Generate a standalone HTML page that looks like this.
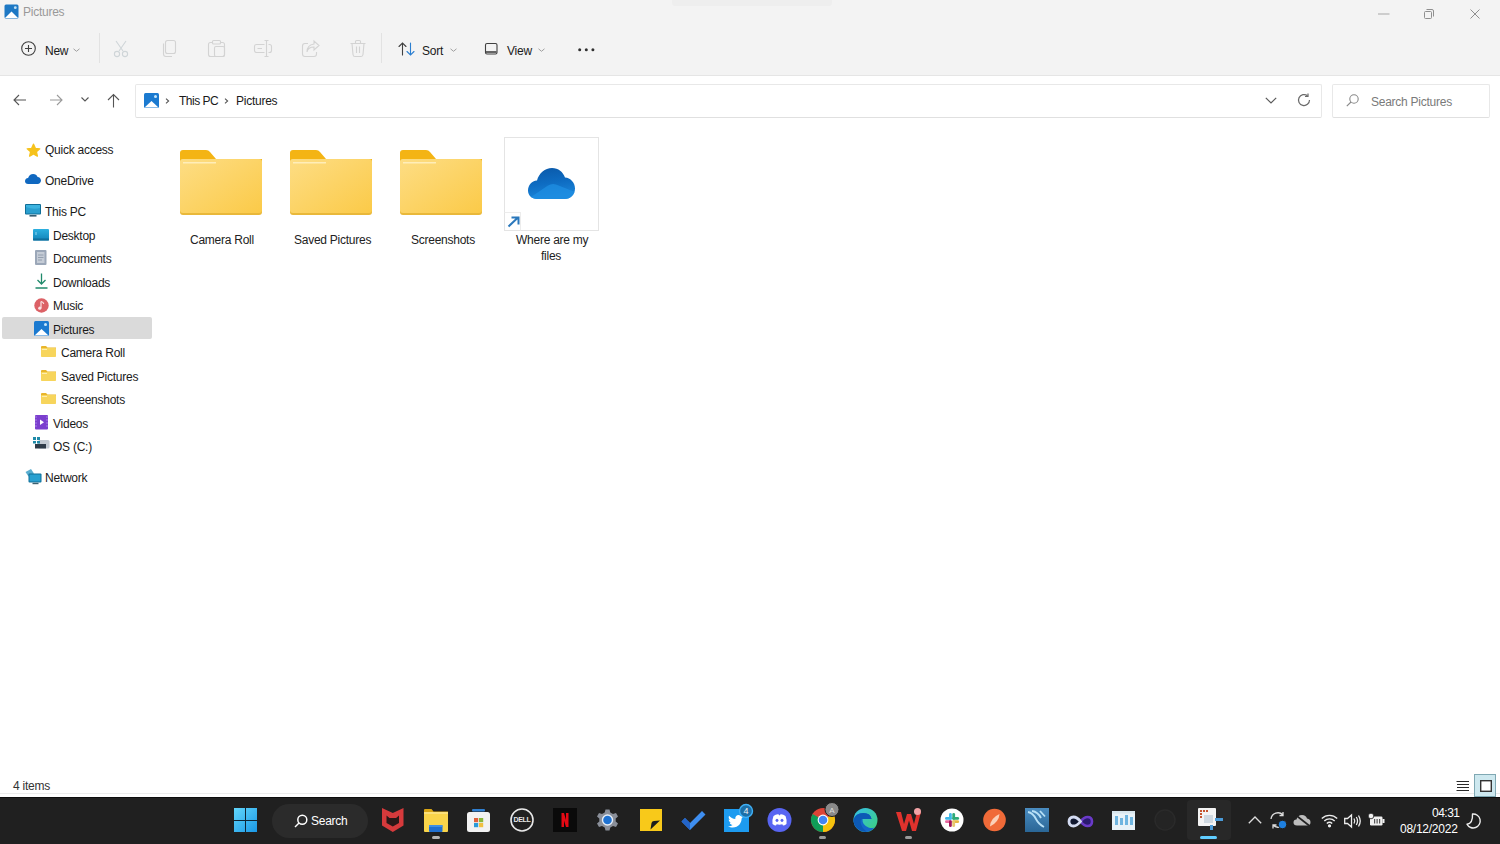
<!DOCTYPE html>
<html><head><meta charset="utf-8">
<style>
*{margin:0;padding:0;box-sizing:border-box}
html,body{width:1500px;height:844px;overflow:hidden;background:#fff;font-family:"Liberation Sans",sans-serif;font-size:12px;color:#1a1a1a}
.a{position:absolute}
.t{position:absolute;white-space:nowrap;line-height:14px;letter-spacing:-0.25px}
#top{position:absolute;left:0;top:0;width:1500px;height:76px;background:#f3f3f3;border-bottom:1px solid #e5e5e5}
#task{position:absolute;left:0;top:797px;width:1500px;height:47px;background:#202020;border-top:1px solid #0d0d0d}
svg{position:absolute;overflow:visible}
</style></head><body>
<div id="top"></div>
<div class="a" style="left:672px;top:0;width:160px;height:6px;background:#eeeeee;border-radius:0 0 3px 3px"></div>

<!-- ============ TITLE BAR ============ -->
<svg style="left:4px;top:4px" width="15" height="15" viewBox="0 0 15 15">
  <rect x="0.5" y="0.5" width="14" height="14" rx="1.5" fill="#1d78c4"/>
  <path d="M1,14 L7.5,7.5 L14,14 Z" fill="#fff"/>
  <circle cx="11.3" cy="3.7" r="1.4" fill="#bfe0f5"/>
</svg>
<div class="t" style="left:23px;top:5px;color:#999">Pictures</div>
<svg style="left:1378px;top:13px" width="12" height="2"><rect x="0" y="0.5" width="11.5" height="1" fill="#a8a8a8"/></svg>
<svg style="left:1424px;top:9px" width="10" height="10" viewBox="0 0 10 10" fill="none" stroke="#8f8f8f" stroke-width="1">
  <rect x="0.5" y="2.5" width="7" height="7" rx="1"/><path d="M2.5,0.5 H8 Q9.5,0.5 9.5,2 V7.5"/>
</svg>
<svg style="left:1470px;top:9px" width="10" height="10" viewBox="0 0 10 10" stroke="#8f8f8f" stroke-width="1">
  <path d="M0.5,0.5 L9.5,9.5 M9.5,0.5 L0.5,9.5"/>
</svg>

<!-- ============ TOOLBAR ============ -->
<svg style="left:21px;top:41px" width="15" height="15" viewBox="0 0 15 15" fill="none" stroke="#404040" stroke-width="1.1">
  <circle cx="7.5" cy="7.5" r="6.8"/><path d="M7.5,4 V11 M4,7.5 H11"/>
</svg>
<div class="t" style="left:45px;top:44px">New</div>
<svg style="left:73px;top:48px" width="7" height="4" viewBox="0 0 7 4" fill="none" stroke="#a0a0a0" stroke-width="1"><path d="M0.5,0.8 L3.5,3.3 L6.5,0.8"/></svg>
<div class="a" style="left:99px;top:33px;width:1px;height:30px;background:#e2e2e2"></div>

<!-- disabled icons -->
<svg style="left:112px;top:40px" width="18" height="18" viewBox="0 0 18 18" fill="none" stroke="#cfd5d8" stroke-width="1.1">
  <path d="M4,1 L11,11 M14,1 L7,11"/><circle cx="5" cy="14" r="2.6"/><circle cx="13" cy="14" r="2.6"/>
</svg>
<svg style="left:162px;top:40px" width="15" height="17" viewBox="0 0 15 17" fill="none" stroke="#d3d3d3" stroke-width="1.1">
  <rect x="3.5" y="0.5" width="10" height="13" rx="2"/><path d="M1.5,3.5 V14 Q1.5,16.5 4,16.5 H10"/>
</svg>
<svg style="left:208px;top:40px" width="17" height="17" viewBox="0 0 17 17" fill="none" stroke="#d3d3d3" stroke-width="1.1">
  <path d="M4.5,2.5 H2.5 Q0.5,2.5 0.5,4.5 V14.5 Q0.5,16.5 2.5,16.5 H14.5 Q16.5,16.5 16.5,14.5 V4.5 Q16.5,2.5 14.5,2.5 H12.5"/><rect x="4.5" y="0.5" width="8" height="3.5" rx="1"/><rect x="6.5" y="6.5" width="10" height="10" rx="1.5"/>
</svg>
<svg style="left:254px;top:40px" width="18" height="17" viewBox="0 0 18 17" fill="none" stroke="#d3d3d3" stroke-width="1.1">
  <path d="M10.5,4.5 H2.5 Q0.5,4.5 0.5,6.5 V10.5 Q0.5,12.5 2.5,12.5 H10.5 M14.5,4.5 H15.5 Q17.5,4.5 17.5,6.5 V10.5 Q17.5,12.5 15.5,12.5 H14.5 M12.5,0.5 V16.5 M10.5,0.5 H14.5 M10.5,16.5 H14.5 M3.5,8.5 H8"/>
</svg>
<svg style="left:302px;top:41px" width="18" height="16" viewBox="0 0 18 16" fill="none" stroke="#d3d3d3" stroke-width="1.1">
  <path d="M6,2.5 H3 Q0.5,2.5 0.5,5 V13 Q0.5,15.5 3,15.5 H12 Q14.5,15.5 14.5,13 V11"/><path d="M5,11 Q6,6 12,6 V9 L17,4.5 L12,0 V3 Q5,4 5,11 Z"/>
</svg>
<svg style="left:350px;top:40px" width="16" height="17" viewBox="0 0 16 17" fill="none" stroke="#d3d3d3" stroke-width="1.1">
  <path d="M0.5,3.5 H15.5 M5.5,3.5 V1.5 Q5.5,0.5 6.5,0.5 H9.5 Q10.5,0.5 10.5,1.5 V3.5 M2,3.5 L3,14.5 Q3.2,16.5 5,16.5 H11 Q12.8,16.5 13,14.5 L14,3.5 M6.5,6.5 V13 M9.5,6.5 V13"/>
</svg>
<div class="a" style="left:381px;top:33px;width:1px;height:30px;background:#e2e2e2"></div>

<!-- sort -->
<svg style="left:398px;top:42px" width="18" height="14" viewBox="0 0 18 14" fill="none" stroke-width="1.1" stroke-linecap="round">
  <path d="M4.5,13 V1 M1,4.5 L4.5,1 L8,4.5" stroke="#404040"/>
  <path d="M12.5,1 V13 M9,9.5 L12.5,13 L16,9.5" stroke="#2b7fd0"/>
</svg>
<div class="t" style="left:422px;top:44px">Sort</div>
<svg style="left:450px;top:48px" width="7" height="4" viewBox="0 0 7 4" fill="none" stroke="#a0a0a0" stroke-width="1"><path d="M0.5,0.8 L3.5,3.3 L6.5,0.8"/></svg>
<!-- view -->
<svg style="left:485px;top:43px" width="13" height="12" viewBox="0 0 13 12" fill="none" stroke="#404040" stroke-width="1.1">
  <rect x="0.5" y="0.5" width="11.5" height="10.5" rx="1.5"/><path d="M1,9 H11.5" stroke-width="1.6"/>
</svg>
<div class="t" style="left:507px;top:44px">View</div>
<svg style="left:538px;top:48px" width="7" height="4" viewBox="0 0 7 4" fill="none" stroke="#a0a0a0" stroke-width="1"><path d="M0.5,0.8 L3.5,3.3 L6.5,0.8"/></svg>
<svg style="left:578px;top:48px" width="17" height="4" viewBox="0 0 17 4" fill="#303030">
  <circle cx="1.7" cy="1.8" r="1.5"/><circle cx="8.3" cy="1.8" r="1.5"/><circle cx="14.9" cy="1.8" r="1.5"/>
</svg>

<!-- ============ ADDRESS ROW ============ -->
<svg style="left:13px;top:94px" width="14" height="12" viewBox="0 0 14 12" fill="none" stroke="#555" stroke-width="1.1">
  <path d="M13,6 H1.5 M6,1 L1,6 L6,11"/>
</svg>
<svg style="left:49px;top:94px" width="14" height="12" viewBox="0 0 14 12" fill="none" stroke="#9a9a9a" stroke-width="1.1">
  <path d="M1,6 H12.5 M8,1 L13,6 L8,11"/>
</svg>
<svg style="left:81px;top:97px" width="8" height="5" viewBox="0 0 8 5" fill="none" stroke="#555" stroke-width="1.1"><path d="M0.5,0.5 L4,4 L7.5,0.5"/></svg>
<svg style="left:107px;top:93px" width="13" height="15" viewBox="0 0 13 15" fill="none" stroke="#555" stroke-width="1.1">
  <path d="M6.5,14.5 V1.5 M1,7 L6.5,1.5 L12,7"/>
</svg>

<div class="a" style="left:135px;top:84px;width:1187px;height:34px;border:1px solid #e8e8e8;border-bottom-color:#e0e0e0;background:#fff;border-radius:2px"></div>
<svg style="left:144px;top:93px" width="15" height="15" viewBox="0 0 15 15">
  <rect x="0" y="0" width="15" height="15" rx="1.5" fill="#1b7ad0"/>
  <path d="M0.5,14.5 L7.5,8 L14.5,14.5 Z" fill="#fff"/>
  <circle cx="11.5" cy="3.6" r="1.5" fill="#c6e6fb"/>
</svg>
<svg style="left:165px;top:98px" width="5" height="6" viewBox="0 0 5 6" fill="none" stroke="#555" stroke-width="1.1"><path d="M1,0.7 L3.6,3 L1,5.3"/></svg>
<div class="t" style="left:179px;top:94px;letter-spacing:-0.5px">This PC</div>
<svg style="left:224px;top:98px" width="5" height="6" viewBox="0 0 5 6" fill="none" stroke="#555" stroke-width="1.1"><path d="M1,0.7 L3.6,3 L1,5.3"/></svg>
<div class="t" style="left:236px;top:94px">Pictures</div>
<svg style="left:1265px;top:97px" width="12" height="7" viewBox="0 0 12 7" fill="none" stroke="#5a5a5a" stroke-width="1.2"><path d="M0.8,0.8 L6,6 L11.2,0.8"/></svg>
<svg style="left:1297px;top:93px" width="14" height="14" viewBox="0 0 14 14" fill="none" stroke="#6a6a6a" stroke-width="1.2">
  <path d="M12.5,7 A5.5,5.5 0 1 1 10.5,2.8"/><path d="M11,0.5 V3.5 H8"/>
</svg>
<div class="a" style="left:1332px;top:84px;width:158px;height:34px;border:1px solid #e8e8e8;border-bottom-color:#e0e0e0;background:#fff;border-radius:2px"></div>
<svg style="left:1346px;top:94px" width="13" height="13" viewBox="0 0 13 13" fill="none" stroke="#888" stroke-width="1.1">
  <circle cx="8" cy="5" r="4.2"/><path d="M5,8 L0.8,12.2"/>
</svg>
<div class="t" style="left:1371px;top:95px;color:#7a7a7a">Search Pictures</div>

<!-- ============ NAV PANE ============ -->
<div class="a" style="left:2px;top:317px;width:150px;height:22px;background:#dadada;border-radius:2px"></div>

<svg style="left:26px;top:143px" width="15" height="15" viewBox="0 0 24 24">
  <path d="M12,2 L14.9,8.6 L22,9.3 L16.6,14 L18.2,21 L12,17.3 L5.8,21 L7.4,14 L2,9.3 L9.1,8.6 Z" fill="#f6c21c" stroke="#f6c21c" stroke-width="2.2" stroke-linejoin="round"/>
</svg>
<div class="t" style="left:45px;top:143px">Quick access</div>

<svg style="left:25px;top:174px" width="16" height="10" viewBox="0 0 47 31" preserveAspectRatio="none">
  <path d="M9,31 C3.5,31 0,27 0,22.5 C0,17.5 3.5,13 9,12.5 C11,5 17,0 24,0 C30.5,0 35,4 37,9.5 C42.5,10 47,14.5 47,20.5 C47,26.5 42.5,31 37,31 Z" fill="#1068c0"/>
</svg>
<div class="t" style="left:45px;top:174px">OneDrive</div>

<svg style="left:25px;top:204px" width="16" height="13" viewBox="0 0 16 13">
  <rect x="0" y="0" width="16" height="10.5" rx="1" fill="#0f6e98"/>
  <rect x="1" y="1" width="14" height="8.5" fill="#2a9fcf"/>
  <path d="M1,1 H15 V4 Q8,6 1,3 Z" fill="#3cb3df"/>
  <rect x="4.5" y="11" width="7" height="1.6" fill="#355e73"/>
</svg>
<div class="t" style="left:45px;top:205px">This PC</div>

<svg style="left:33px;top:229px" width="16" height="12" viewBox="0 0 16 12">
  <defs><linearGradient id="dg" x1="0" y1="0" x2="0" y2="1"><stop offset="0" stop-color="#2cb0e0"/><stop offset="1" stop-color="#1283b8"/></linearGradient></defs>
  <rect x="0" y="0" width="16" height="11.5" rx="1" fill="url(#dg)"/>
  <rect x="0" y="9.5" width="16" height="2" rx="0.5" fill="#0f6f9c"/>
  <rect x="2.5" y="3" width="1" height="3" fill="#8ed6f2"/>
</svg>
<div class="t" style="left:53px;top:229px">Desktop</div>

<svg style="left:35px;top:250px" width="12" height="15" viewBox="0 0 12 15">
  <rect x="0" y="0" width="11.5" height="15" rx="1" fill="#9ba7b8"/>
  <rect x="2" y="2" width="7.5" height="11" fill="#c5ccd6"/>
  <path d="M3,5 H8.5 M3,7.5 H8.5 M3,10 H7" stroke="#8894a5" stroke-width="0.8"/>
</svg>
<div class="t" style="left:53px;top:252px">Documents</div>

<svg style="left:35px;top:273px" width="13" height="16" viewBox="0 0 13 16" fill="none" stroke="#208a6b" stroke-width="1.3">
  <path d="M6.5,0.5 V11 M2.5,7 L6.5,11 L10.5,7 M0.5,15 H12.5"/>
</svg>
<div class="t" style="left:53px;top:276px">Downloads</div>

<svg style="left:34px;top:298px" width="15" height="15" viewBox="0 0 15 15">
  <circle cx="7.5" cy="7.5" r="7.2" fill="#dc6166"/>
  <path d="M7,3.5 V10" stroke="#fbe3e5" stroke-width="1.2"/><circle cx="5.8" cy="10.2" r="1.6" fill="#fbe3e5"/><path d="M7,3.5 Q9.5,4 9.8,6" stroke="#fbe3e5" stroke-width="1.1" fill="none"/>
</svg>
<div class="t" style="left:53px;top:299px">Music</div>

<svg style="left:34px;top:321px" width="15" height="15" viewBox="0 0 15 15">
  <rect x="0" y="0" width="15" height="15" rx="1.5" fill="#1b7ad0"/>
  <path d="M0.5,14.5 L7.5,8 L14.5,14.5 Z" fill="#fff"/>
  <circle cx="11.5" cy="3.6" r="1.5" fill="#c6e6fb"/>
</svg>
<div class="t" style="left:53px;top:323px">Pictures</div>

<svg style="left:41px;top:346px" width="15" height="11" viewBox="0 0 15 11">
  <path d="M0,1 Q0,0 1,0 H5 L6.5,1.5 H15 V4 H0 Z" fill="#e9b52b"/>
  <rect x="0" y="2" width="15" height="9" rx="0.8" fill="#f7d55c"/>
  <rect x="1" y="3" width="5" height="0.8" fill="#fff3c4"/>
</svg>
<div class="t" style="left:61px;top:346px">Camera Roll</div>
<svg style="left:41px;top:370px" width="15" height="11" viewBox="0 0 15 11">
  <path d="M0,1 Q0,0 1,0 H5 L6.5,1.5 H15 V4 H0 Z" fill="#e9b52b"/>
  <rect x="0" y="2" width="15" height="9" rx="0.8" fill="#f7d55c"/>
  <rect x="1" y="3" width="5" height="0.8" fill="#fff3c4"/>
</svg>
<div class="t" style="left:61px;top:370px">Saved Pictures</div>
<svg style="left:41px;top:393px" width="15" height="11" viewBox="0 0 15 11">
  <path d="M0,1 Q0,0 1,0 H5 L6.5,1.5 H15 V4 H0 Z" fill="#e9b52b"/>
  <rect x="0" y="2" width="15" height="9" rx="0.8" fill="#f7d55c"/>
  <rect x="1" y="3" width="5" height="0.8" fill="#fff3c4"/>
</svg>
<div class="t" style="left:61px;top:393px">Screenshots</div>

<svg style="left:35px;top:415px" width="13" height="15" viewBox="0 0 13 15">
  <rect x="0" y="0" width="13" height="14.5" rx="1" fill="#7b3fce"/>
  <path d="M0,2 H2 M0,5 H2 M0,8 H2 M0,11 H2 M11,2 H13 M11,5 H13 M11,8 H13 M11,11 H13" stroke="#a77ce6" stroke-width="1"/>
  <path d="M5,4.5 L9,7.3 L5,10 Z" fill="#fff"/>
</svg>
<div class="t" style="left:53px;top:417px">Videos</div>

<svg style="left:33px;top:437px" width="17" height="12" viewBox="0 0 17 12">
  <rect x="5" y="3" width="11.5" height="8.5" rx="1.5" fill="#c3cad2"/>
  <rect x="2" y="7" width="11" height="4.5" fill="#2f3b48"/>
  <rect x="0" y="0" width="3" height="3" fill="#1f8aa8"/><rect x="4" y="0" width="3" height="3" fill="#1f8aa8"/>
  <rect x="0" y="4" width="3" height="2.5" fill="#1f8aa8"/><rect x="4" y="4" width="3" height="2.5" fill="#1f8aa8"/>
</svg>
<div class="t" style="left:53px;top:440px">OS (C:)</div>

<svg style="left:25px;top:469px" width="17" height="15" viewBox="0 0 17 15">
  <path d="M0.5,3 L6,0 L9,4.5 L3.5,7.5 Z" fill="#5aaed0"/>
  <rect x="3.5" y="4.5" width="13" height="9" rx="1" fill="#0f6e98"/>
  <rect x="4.5" y="5.5" width="11" height="7" fill="#28a0d0"/>
  <rect x="7.5" y="13.8" width="6" height="1.4" fill="#3b6070"/>
</svg>
<div class="t" style="left:45px;top:471px">Network</div>

<!-- ============ CONTENT ============ -->
<svg style="left:180px;top:150px" width="82" height="65" viewBox="0 0 82 65">
  <defs>
    <linearGradient id="fg" x1="0" y1="0" x2="1" y2="1">
      <stop offset="0" stop-color="#fddd84"/><stop offset="1" stop-color="#fbca48"/>
    </linearGradient>
  </defs>
  <path d="M0,3 Q0,0 3,0 H26 Q28.5,0 30,2 L36,9 H82 V20 H0 Z" fill="#f4b414"/>
  <rect x="0" y="9" width="82" height="56" rx="3" fill="#e9b83a"/>
  <rect x="0" y="9" width="82" height="54" rx="3" fill="url(#fg)"/>
  <rect x="3" y="12" width="33" height="1.5" fill="#fff2c8" opacity="0.8"/>
</svg>
<svg style="left:290px;top:150px" width="82" height="65" viewBox="0 0 82 65">
  <path d="M0,3 Q0,0 3,0 H26 Q28.5,0 30,2 L36,9 H82 V20 H0 Z" fill="#f4b414"/>
  <rect x="0" y="9" width="82" height="56" rx="3" fill="#e9b83a"/>
  <rect x="0" y="9" width="82" height="54" rx="3" fill="url(#fg)"/>
  <rect x="3" y="12" width="33" height="1.5" fill="#fff2c8" opacity="0.8"/>
</svg>
<svg style="left:400px;top:150px" width="82" height="65" viewBox="0 0 82 65">
  <path d="M0,3 Q0,0 3,0 H26 Q28.5,0 30,2 L36,9 H82 V20 H0 Z" fill="#f4b414"/>
  <rect x="0" y="9" width="82" height="56" rx="3" fill="#e9b83a"/>
  <rect x="0" y="9" width="82" height="54" rx="3" fill="url(#fg)"/>
  <rect x="3" y="12" width="33" height="1.5" fill="#fff2c8" opacity="0.8"/>
</svg>

<div class="a" style="left:504px;top:137px;width:95px;height:94px;border:1px solid #e4e4e4;background:#fff"></div>
<svg style="left:528px;top:168px" width="47" height="31" viewBox="0 0 47 31">
  <defs>
    <linearGradient id="og" x1="0" y1="0" x2="0.2" y2="1">
      <stop offset="0" stop-color="#0a58a8"/><stop offset="0.55" stop-color="#0e6cc2"/><stop offset="1" stop-color="#1a84d8"/>
    </linearGradient>
    <clipPath id="oc"><path d="M9,31 C3.5,31 0,27 0,22.5 C0,17.5 3.5,13 9,12.5 C11,5 17,0 24,0 C30.5,0 35,4 37,9.5 C42.5,10 47,14.5 47,20.5 C47,26.5 42.5,31 37,31 Z"/></clipPath>
  </defs>
  <g clip-path="url(#oc)">
    <rect x="0" y="0" width="47" height="31" fill="url(#og)"/>
    <path d="M0,31 L20,17.5 Q24,15 28,16.5 L47,24 V31 Z" fill="#1f8fe3" opacity="0.75"/>
  </g>
</svg>
<div class="a" style="left:504px;top:212px;width:17px;height:19px;background:#fff;border:1px solid #ececec;border-left-color:#e4e4e4;border-bottom-color:#e4e4e4"></div>
<svg style="left:507px;top:216px" width="13" height="12" viewBox="0 0 13 12" fill="none" stroke="#2a78bc" stroke-width="2">
  <path d="M1.5,10.5 L10.5,2 M4.5,1.5 H11.5 V8.5"/>
</svg>

<div class="t" style="left:190px;top:233px;color:#222">Camera Roll</div>
<div class="t" style="left:294px;top:233px;color:#222">Saved Pictures</div>
<div class="t" style="left:411px;top:233px;color:#222">Screenshots</div>
<div class="t" style="left:516px;top:233px;color:#222">Where are my</div>
<div class="t" style="left:541px;top:249px;color:#222">files</div>

<!-- ============ STATUS ============ -->
<div class="t" style="left:13px;top:779px;color:#333">4 items</div>
<div class="a" style="left:0;top:793px;width:1500px;height:1px;background:#ececec"></div>
<svg style="left:1456px;top:780px" width="13" height="11" viewBox="0 0 13 11" stroke="#2a2a2a" stroke-width="1">
  <path d="M0.5,1.5 H13 M1,4.5 H13 M1,7.5 H13 M0.5,10.5 H13"/>
</svg>
<div class="a" style="left:1474px;top:774px;width:22px;height:23px;background:#cde8ef;border:1px solid #7fa8b3"></div>
<svg style="left:1480px;top:780px" width="12" height="12" viewBox="0 0 12 12" fill="#fff" stroke="#333" stroke-width="1.4">
  <rect x="0.7" y="0.7" width="10.6" height="10.6"/>
</svg>

<!-- ============ TASKBAR ============ -->
<div id="task"></div>

<!-- windows logo -->
<svg style="left:234px;top:808px" width="23" height="24" viewBox="0 0 23 24">
  <defs><linearGradient id="wg" gradientUnits="userSpaceOnUse" x1="0" y1="0" x2="23" y2="24"><stop offset="0" stop-color="#62d6fb"/><stop offset="1" stop-color="#1a98e6"/></linearGradient></defs>
  <rect x="0" y="0" width="23" height="24" fill="url(#wg)"/>
  <rect x="11" y="0" width="1" height="24" fill="#0e2536"/>
  <rect x="0" y="12" width="23" height="1" fill="#0e2536"/>
</svg>
<!-- search pill -->
<div class="a" style="left:272px;top:804px;width:96px;height:34px;background:#2b2b2b;border-radius:17px"></div>
<svg style="left:294px;top:814px" width="14" height="14" viewBox="0 0 14 14" fill="none" stroke="#fff" stroke-width="1.5">
  <circle cx="8.3" cy="5.7" r="4.5"/><path d="M5,9 L1,13"/>
</svg>
<div class="t" style="left:311px;top:814px;color:#fff">Search</div>
<!-- mcafee -->
<svg style="left:382px;top:808px" width="22" height="24" viewBox="0 0 22 24">
  <path d="M0,0 L10.8,5 L21.5,0 V17.5 L10.8,24 L0,17.5 Z" fill="#d63a3c"/>
  <path d="M4.5,7.5 L7.5,10 H14 L17,7.5 V15 L10.8,18.5 L4.5,15 Z" fill="#2a1818"/>
</svg>
<!-- file explorer -->
<svg style="left:424px;top:809px" width="24" height="23" viewBox="0 0 24 23">
  <path d="M0,1 Q0,0 1,0 H7.5 L9.5,2.5 H24 V6 H0 Z" fill="#d9a514"/>
  <rect x="0" y="3" width="24" height="20" rx="1" fill="#f9d44a"/>
  <rect x="0" y="3" width="24" height="2" fill="#fbe07a"/>
  <rect x="5" y="16" width="13.5" height="7" rx="1" fill="#1f6fd0"/>
  <rect x="5" y="16" width="13.5" height="2" fill="#3e8fe6"/>
</svg>
<div class="a" style="left:432px;top:836px;width:8px;height:3px;border-radius:2px;background:#b5b5b5"></div>
<!-- store -->
<svg style="left:467px;top:809px" width="23" height="23" viewBox="0 0 23 23">
  <rect x="5" y="0" width="13" height="2.5" rx="1" fill="#2f7fd0"/>
  <rect x="0" y="3" width="23" height="20" rx="2.5" fill="#f2f2f2"/>
  <rect x="7" y="9" width="4.2" height="4.2" fill="#e0603a"/><rect x="12" y="9" width="4.2" height="4.2" fill="#8ab83a"/>
  <rect x="7" y="14" width="4.2" height="4.2" fill="#2a9ad8"/><rect x="12" y="14" width="4.2" height="4.2" fill="#f0c040"/>
</svg>
<!-- dell -->
<svg style="left:510px;top:808px" width="24" height="24" viewBox="0 0 24 24">
  <circle cx="12" cy="12" r="11" fill="none" stroke="#e8e8e8" stroke-width="1.6"/>
  <text x="12" y="14.3" text-anchor="middle" font-family="Liberation Sans" font-size="7" font-weight="bold" fill="#e8e8e8" letter-spacing="-0.3">DELL</text>
</svg>
<!-- netflix -->
<svg style="left:553px;top:808px" width="24" height="24" viewBox="0 0 24 24">
  <rect x="0" y="0" width="24" height="24" fill="#0a0a0a"/>
  <path d="M8.5,5 H11 L13,12 V5 H15.5 V19 H13 L11,12.5 V19 H8.5 Z" fill="#e50914"/>
</svg>
<!-- settings -->
<svg style="left:595px;top:808px" width="25" height="24" viewBox="0 0 24 24">
  <path d="M10,0.5 H14 L14.8,3.5 L17.5,5 L20.5,4 L22.5,7.5 L20.2,9.6 V12.5 L22.5,14.5 L20.5,18 L17.5,17 L14.8,18.6 L14,21.5 H10 L9.2,18.6 L6.5,17 L3.5,18 L1.5,14.5 L3.8,12.5 V9.6 L1.5,7.5 L3.5,4 L6.5,5 L9.2,3.5 Z" transform="translate(0,1)" fill="#8a8f99"/>
  <circle cx="12" cy="12" r="5" fill="#1e72d2" stroke="#e6eef8" stroke-width="1.4"/>
</svg>
<!-- sticky notes -->
<svg style="left:640px;top:809px" width="22" height="22" viewBox="0 0 22 22">
  <rect x="0" y="0" width="22" height="22" fill="#f8c91a"/>
  <path d="M10.5,20.5 L11.5,14 Q12,12 14,12 L20,11.5 Z" fill="#1c1c1c"/>
</svg>
<!-- todo -->
<svg style="left:681px;top:811px" width="25" height="20" viewBox="0 0 25 20">
  <path d="M0.5,10.5 L4,7 L9,12 L21,0 L24.5,3.5 L9,19 Z" fill="#3e8ef0"/>
  <path d="M0.5,10.5 L4,7 L9,12 L9,19 Z" fill="#2364c8"/>
</svg>
<!-- twitter -->
<svg style="left:724px;top:808px" width="26" height="24" viewBox="0 0 26 24">
  <rect x="0" y="1" width="25" height="23" fill="#1d9bf0"/>
  <path d="M19,8.5 C18.4,8.8 17.8,8.9 17.2,9 C17.8,8.6 18.3,8 18.5,7.3 C17.9,7.7 17.3,7.9 16.6,8.1 C15.4,6.8 13.4,6.8 12.2,8 C11.4,8.8 11.1,9.9 11.4,11 C8.9,10.9 6.6,9.7 5.1,7.8 C4.3,9.2 4.7,11 6.1,11.9 C5.6,11.9 5.1,11.7 4.7,11.5 C4.7,13 5.7,14.3 7.2,14.6 C6.7,14.7 6.2,14.8 5.7,14.7 C6.1,16 7.3,16.8 8.6,16.9 C7.3,17.9 5.6,18.4 4,18.2 C5.4,19.1 7.1,19.6 8.8,19.6 C14.5,19.6 17.6,14.9 17.6,10.8 V10.4 C18.2,9.9 18.7,9.4 19,8.5 Z" fill="#fff"/>
  <circle cx="22" cy="3" r="6.5" fill="#1d6fa8" stroke="#3fb0f5" stroke-width="1.4"/>
  <text x="22" y="6.3" text-anchor="middle" font-family="Liberation Sans" font-size="9" fill="#f0f0f0">4</text>
</svg>
<!-- discord -->
<svg style="left:767px;top:808px" width="25" height="24" viewBox="0 0 24 24">
  <circle cx="12" cy="12" r="12" fill="#5865f2"/>
  <path d="M6,8 Q8.5,6 11,6.3 L11.5,7.3 H12.5 L13,6.3 Q15.5,6 18,8 Q19.5,11.5 19,16 Q17,17.5 15.5,17.5 L14.8,16.3 Q12,17 9.2,16.3 L8.5,17.5 Q7,17.5 5,16 Q4.5,11.5 6,8 Z" fill="#fff"/>
  <ellipse cx="9.5" cy="12.3" rx="1.4" ry="1.6" fill="#5865f2"/><ellipse cx="14.5" cy="12.3" rx="1.4" ry="1.6" fill="#5865f2"/>
</svg>
<!-- chrome -->
<svg style="left:811px;top:808px" width="30" height="24" viewBox="0 0 30 24">
  <circle cx="12" cy="12" r="12" fill="#db4437"/>
  <path d="M12,12 L22.4,6 A12,12 0 0 1 12,24 Z" fill="#f4c20d"/>
  <path d="M12,12 L12,24 A12,12 0 0 1 1.6,6 Z" fill="#0f9d58"/>
  <circle cx="12" cy="12" r="5.4" fill="#fff"/><circle cx="12" cy="12" r="4.3" fill="#4285f4"/>
  <circle cx="21" cy="1.5" r="7" fill="#8a8a8a" stroke="#202020" stroke-width="1"/>
  <text x="21" y="4.5" text-anchor="middle" font-family="Liberation Sans" font-size="8" fill="#ddd">A</text>
</svg>
<div class="a" style="left:819px;top:836px;width:7px;height:3px;border-radius:2px;background:#9a9a9a"></div>
<!-- edge -->
<svg style="left:853px;top:808px" width="25" height="24" viewBox="0 0 24 24">
  <defs><linearGradient id="eg1" x1="0" y1="0" x2="1" y2="1"><stop offset="0" stop-color="#36c0e8"/><stop offset="1" stop-color="#3ccf7a"/></linearGradient></defs>
  <circle cx="12" cy="12" r="12" fill="url(#eg1)"/>
  <path d="M12,24 A12,12 0 0 1 0,12 Q2,5 10,5 Q17,5 18,11 H9 Q8.5,17 15,19.5 Q18,20.5 21,19.5 A12,12 0 0 1 12,24 Z" fill="#1467c9"/>
  <path d="M0,12 Q2,5 10,5 Q17,5 18,11 H9 Q7,11 7,13 Q7,19 13,23.5 A12,12 0 0 1 0,12 Z" fill="#0c59b5"/>
</svg>
<!-- wps -->
<svg style="left:896px;top:808px" width="26" height="24" viewBox="0 0 26 24">
  <path d="M0,4 H5 L8,16 L11,6 H15 L18,16 L21,4 H25 L20,23 H16 L13,12.5 L10,23 H6 Z" fill="#e0322d"/>
  <circle cx="21.5" cy="3.5" r="3.5" fill="#f2a3a6"/>
</svg>
<div class="a" style="left:905px;top:836px;width:7px;height:3px;border-radius:2px;background:#9a9a9a"></div>
<!-- slack -->
<svg style="left:940px;top:808px" width="24" height="24" viewBox="0 0 24 24">
  <circle cx="12" cy="12" r="11.5" fill="#fff"/>
  <rect x="5" y="9" width="6.8" height="2.8" rx="1.4" fill="#3fb8e8"/><rect x="9" y="5" width="2.8" height="6.8" rx="1.4" fill="#3fb8e8"/>
  <rect x="12.3" y="5" width="2.8" height="6.8" rx="1.4" fill="#2eaa78"/><rect x="12.3" y="9" width="6.8" height="2.8" rx="1.4" fill="#2eaa78"/>
  <rect x="5" y="12.3" width="6.8" height="2.8" rx="1.4" fill="#e86aa0"/><rect x="9" y="12.3" width="2.8" height="6.8" rx="1.4" fill="#a0185a"/>
  <rect x="12.3" y="12.3" width="6.8" height="2.8" rx="1.4" fill="#e8b840"/><rect x="12.3" y="12.3" width="2.8" height="6.8" rx="1.4" fill="#e8c870"/>
</svg>
<!-- orange -->
<svg style="left:983px;top:808px" width="23" height="24" viewBox="0 0 23 24">
  <circle cx="11.5" cy="12" r="11.3" fill="#f06a38"/>
  <path d="M7,18.5 Q7.5,10 16.5,6 Q16,14 7,18.5 Z" fill="#fbd0b8"/>
</svg>
<!-- mysql -->
<svg style="left:1025px;top:808px" width="24" height="24" viewBox="0 0 24 24">
  <defs><linearGradient id="mg" x1="0" y1="0" x2="0" y2="1"><stop offset="0" stop-color="#4a8cc0"/><stop offset="1" stop-color="#2a6696"/></linearGradient></defs>
  <rect x="0" y="0" width="24" height="24" fill="url(#mg)"/>
  <path d="M3,4 Q8,5 11,11 Q13.5,16 19,19 M7,3 Q13,4 16,10 M15,3 L20,8.5" stroke="#b8e0f6" stroke-width="1.8" fill="none"/>
</svg>
<!-- infinity -->
<svg style="left:1067px;top:815px" width="27" height="13" viewBox="0 0 27 13">
  <path d="M13.5,6.5 Q17,2 20.5,2 Q25,2 25,6.5 Q25,11 20.5,11 Q17,11 13.5,6.5 Z" fill="#2a1a70" stroke="#6a3ac8" stroke-width="2.6"/>
  <path d="M13.5,6.5 Q10,11 6.5,11 Q2,11 2,6.5 Q2,2 6.5,2 Q10,2 13.5,6.5 Z" fill="#101830" stroke="#d4dcf2" stroke-width="2.8"/>
</svg>
<!-- box -->
<svg style="left:1112px;top:811px" width="23" height="19" viewBox="0 0 23 19">
  <rect x="0" y="0" width="23" height="19" fill="#e8f2f8"/>
  <rect x="0" y="0" width="23" height="2.5" fill="#d8e6ee"/>
  <rect x="3" y="5" width="3" height="9" fill="#6fb5e0"/><rect x="8" y="7" width="3" height="7" fill="#6fb5e0"/><rect x="13" y="4" width="3" height="10" fill="#6fb5e0"/><rect x="18" y="6" width="3" height="8" fill="#6fb5e0"/>
</svg>
<!-- faint circle -->
<svg style="left:1154px;top:809px" width="22" height="22" viewBox="0 0 22 22">
  <circle cx="11" cy="11" r="10" fill="#242424" stroke="#2a2a2a" stroke-width="1.5"/>
</svg>
<!-- active app -->
<div class="a" style="left:1187px;top:800px;width:44px;height:40px;background:#282828;border-radius:4px"></div>
<svg style="left:1198px;top:808px" width="26" height="24" viewBox="0 0 26 24">
  <rect x="0" y="0" width="18" height="18" rx="1" fill="#f4f4f4"/>
  <rect x="2" y="2" width="2" height="2" fill="#c5552f"/><rect x="5" y="2" width="2" height="2" fill="#c5552f"/><rect x="8" y="2" width="2" height="2" fill="#c5552f"/>
  <rect x="2" y="5" width="2" height="2" fill="#c5552f"/><rect x="2" y="8" width="2" height="2" fill="#c5552f"/>
  <rect x="6" y="7" width="9" height="8" fill="#cfd8e0"/>
  <rect x="17" y="10" width="8" height="3" fill="#4a9ad8"/><rect x="12" y="17" width="3" height="5" fill="#4a9ad8"/>
</svg>
<div class="a" style="left:1200px;top:836px;width:17px;height:3px;border-radius:2px;background:#60cdff"></div>
<!-- tray -->
<svg style="left:1248px;top:816px" width="14" height="8" viewBox="0 0 14 8" fill="none" stroke="#ddd" stroke-width="1.3"><path d="M0.8,7.2 L7,1 L13.2,7.2"/></svg>
<svg style="left:1269px;top:811px" width="19" height="19" viewBox="0 0 19 19" fill="none" stroke="#ddd" stroke-width="1.3">
  <path d="M2,8 A7,7 0 0 1 14,4 M16,10 A7,7 0 0 1 4,14 M14,1 V4.5 H10.5 M4,17.5 V14 H7.5"/>
  <circle cx="13.5" cy="13.5" r="4.2" fill="#1e80e0" stroke="#202020" stroke-width="1"/>
</svg>
<svg style="left:1293px;top:814px" width="18" height="12" viewBox="0 0 18 12">
  <path d="M4,11.5 Q0.5,11.5 0.5,8.5 Q0.5,5.5 3.5,5.5 Q4.5,1 9,1 Q13,1 14,4.5 Q17.5,5 17.5,8.2 Q17.5,11.5 14,11.5 Z" fill="#bdbdbd"/>
  <path d="M2,0.5 L16,11.5" stroke="#202020" stroke-width="1.6"/>
</svg>
<svg style="left:1321px;top:814px" width="17" height="13" viewBox="0 0 17 13" fill="none" stroke="#eee" stroke-width="1.4">
  <path d="M0.8,4.5 A11,11 0 0 1 16.2,4.5 M3.3,7 A7.5,7.5 0 0 1 13.7,7 M5.8,9.5 A4,4 0 0 1 11.2,9.5"/><circle cx="8.5" cy="11.8" r="0.9" fill="#eee"/>
</svg>
<svg style="left:1344px;top:814px" width="17" height="14" viewBox="0 0 17 14" fill="none" stroke="#eee" stroke-width="1.3">
  <path d="M0.7,4.5 H3.5 L7.5,1 V13 L3.5,9.5 H0.7 Z M10,4.5 Q11.5,7 10,9.5 M12.3,3 Q14.8,7 12.3,11 M14.5,1.5 Q18,7 14.5,12.5"/>
</svg>
<svg style="left:1368px;top:813px" width="17" height="13" viewBox="0 0 17 13">
  <rect x="2" y="3.5" width="12.5" height="9" rx="1.2" fill="#f0f0f0"/>
  <rect x="14.5" y="6" width="2" height="4" fill="#f0f0f0"/>
  <rect x="6" y="6" width="1.2" height="4.5" fill="#555"/><rect x="8.5" y="6" width="1.2" height="4.5" fill="#555"/><rect x="11" y="6" width="1.2" height="4.5" fill="#555"/>
  <circle cx="3" cy="3" r="2.8" fill="#f0f0f0" stroke="#202020" stroke-width="0.8"/>
</svg>
<div class="t" style="left:1432px;top:806px;color:#fff;font-size:12px;letter-spacing:-0.5px">04:31</div>
<div class="t" style="left:1400px;top:822px;color:#fff;font-size:12px;letter-spacing:-0.25px">08/12/2022</div>
<svg style="left:1466px;top:813px" width="16" height="16" viewBox="0 0 16 16" fill="none" stroke="#eee" stroke-width="1.4" stroke-linejoin="round">
  <path d="M6.5,1 A7,7 0 1 1 1,11.2 Q7,10.5 6.5,1 Z"/>
</svg>
</body></html>
